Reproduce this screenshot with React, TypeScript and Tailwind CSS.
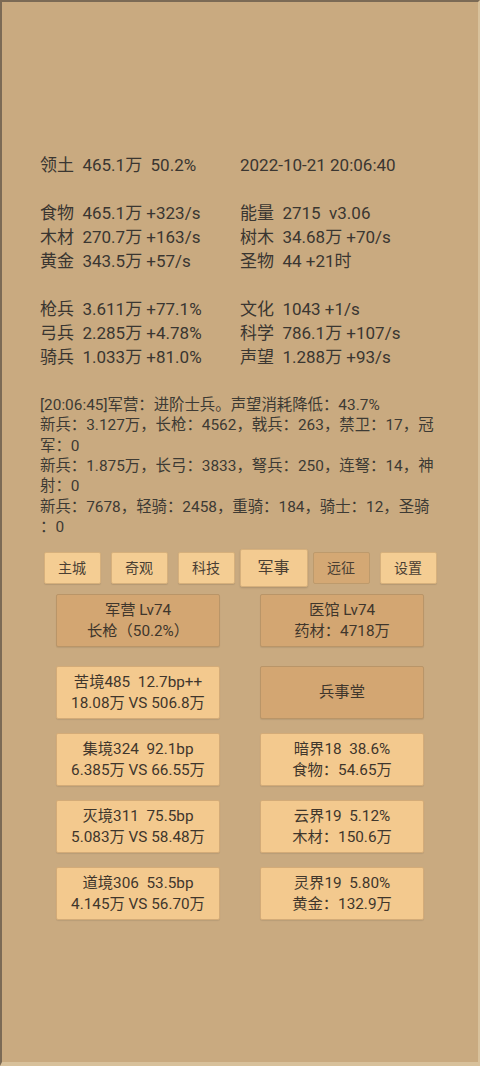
import React from 'react';

const stats: [string, string][] = [
  ['领土  465.1万  50.2%', '2022-10-21 20:06:40'],
  ['', ''],
  ['食物  465.1万 +323/s', '能量  2715  v3.06'],
  ['木材  270.7万 +163/s', '树木  34.68万 +70/s'],
  ['黄金  343.5万 +57/s', '圣物  44 +21时'],
  ['', ''],
  ['枪兵  3.611万 +77.1%', '文化  1043 +1/s'],
  ['弓兵  2.285万 +4.78%', '科学  786.1万 +107/s'],
  ['骑兵  1.033万 +81.0%', '声望  1.288万 +93/s'],
];

const logLines = [
  '[20:06:45]军营：进阶士兵。声望消耗降低：43.7%',
  '新兵：3.127万，长枪：4562，戟兵：263，禁卫：17，冠',
  '军：0',
  '新兵：1.875万，长弓：3833，弩兵：250，连弩：14，神',
  '射：0',
  '新兵：7678，轻骑：2458，重骑：184，骑士：12，圣骑',
  '：0',
];

const tabs = [
  { label: '主城', kind: 'normal' },
  { label: '奇观', kind: 'normal' },
  { label: '科技', kind: 'normal' },
  { label: '军事', kind: 'active' },
  { label: '远征', kind: 'dim' },
  { label: '设置', kind: 'normal' },
];

type Card = { lines: string[]; dark?: boolean };

const cards: Card[][] = [
  [
    { lines: ['军营 Lv74', '长枪（50.2%）'], dark: true },
    { lines: ['医馆 Lv74', '药材：4718万'], dark: true },
  ],
  [
    { lines: ['苦境485  12.7bp++', '18.08万 VS 506.8万'] },
    { lines: ['兵事堂'], dark: true },
  ],
  [
    { lines: ['集境324  92.1bp', '6.385万 VS 66.55万'] },
    { lines: ['暗界18  38.6%', '食物：54.65万'] },
  ],
  [
    { lines: ['灭境311  75.5bp', '5.083万 VS 58.48万'] },
    { lines: ['云界19  5.12%', '木材：150.6万'] },
  ],
  [
    { lines: ['道境306  53.5bp', '4.145万 VS 56.70万'] },
    { lines: ['灵界19  5.80%', '黄金：132.9万'] },
  ],
];

const CardBox = ({ card }: { card: Card }) => (
  <div
    className={
      card.dark
        ? 'h-[53px] flex flex-col items-center justify-center rounded-[2px] border border-[#b99568] bg-[#d3a672] text-[#3f362c] shadow-[0_1px_1px_rgba(0,0,0,0.08)]'
        : 'h-[53px] flex flex-col items-center justify-center rounded-[2px] border border-[#d3ab78] bg-[#f3c98e] text-[#3f362c] shadow-[0_1px_1px_rgba(0,0,0,0.08)]'
    }
  >
    {card.lines.map((l, i) => (
      <div key={i} className="whitespace-pre text-[15.3px] leading-[21px]">
        {l}
      </div>
    ))}
  </div>
);

const App = () => {
  return (
    <div
      className="w-[480px] h-[1066px] overflow-hidden bg-[#c9aa80] border-t-2 border-l-2 border-r-2 border-b-4 border-t-[#7b6a55] border-l-[#7b6a55] border-r-[#d8c19b] border-b-[#d8c19b] text-[#3a3631]"
      style={{ fontFamily: 'Roboto, "Noto Sans CJK SC", sans-serif' }}
    >
      {/* Stats */}
      <div className="pt-[151px] pl-[38px] text-[17px] leading-[24px]">
        {stats.map(([a, b], i) => (
          <div key={i} className="grid grid-cols-[200px_1fr] h-[24px] whitespace-pre">
            <span>{a}</span>
            <span>{b}</span>
          </div>
        ))}
      </div>

      {/* Log */}
      <div className="mt-[26px] pl-[38px] text-[15.4px] leading-[20.33px] text-[#3d3a34]">
        {logLines.map((l, i) => (
          <div key={i} className="whitespace-pre">
            {l}
          </div>
        ))}
      </div>

      {/* Tabs */}
      <div className="mt-[12px] h-[38px] flex items-center justify-center gap-[10px]">
        {tabs.map((t) =>
          t.kind === 'active' ? (
            <div
              key={t.label}
              className="-mx-[5px] w-[68px] h-[38px] flex items-center justify-center rounded-[2px] border border-[#d6b07c] bg-[#f3cb91] text-[16px] text-[#4a3f33] shadow-[0_1px_2px_rgba(0,0,0,0.15)]"
            >
              {t.label}
            </div>
          ) : (
            <div
              key={t.label}
              className={
                t.kind === 'dim'
                  ? 'w-[57px] h-[32px] flex items-center justify-center rounded-[2px] border border-[#bd9a6c] bg-[#d4a874] text-[14px] text-[#4a3f33]'
                  : 'w-[57px] h-[32px] flex items-center justify-center rounded-[2px] border border-[#d6b07c] bg-[#f4cd93] text-[14px] text-[#4a3f33] shadow-[0_1px_1px_rgba(0,0,0,0.1)]'
              }
            >
              {t.label}
            </div>
          )
        )}
      </div>

      {/* Cards */}
      <div className="mt-[7px] flex flex-col gap-[14px]">
        {cards.map((row, i) => (
          <div
            key={i}
            className={i === 0 ? 'grid grid-cols-[164px_164px] gap-x-[40px] justify-center mb-[5px]' : 'grid grid-cols-[164px_164px] gap-x-[40px] justify-center'}
          >
            {row.map((c, j) => (
              <CardBox key={j} card={c} />
            ))}
          </div>
        ))}
      </div>
    </div>
  );
};

export default App;
